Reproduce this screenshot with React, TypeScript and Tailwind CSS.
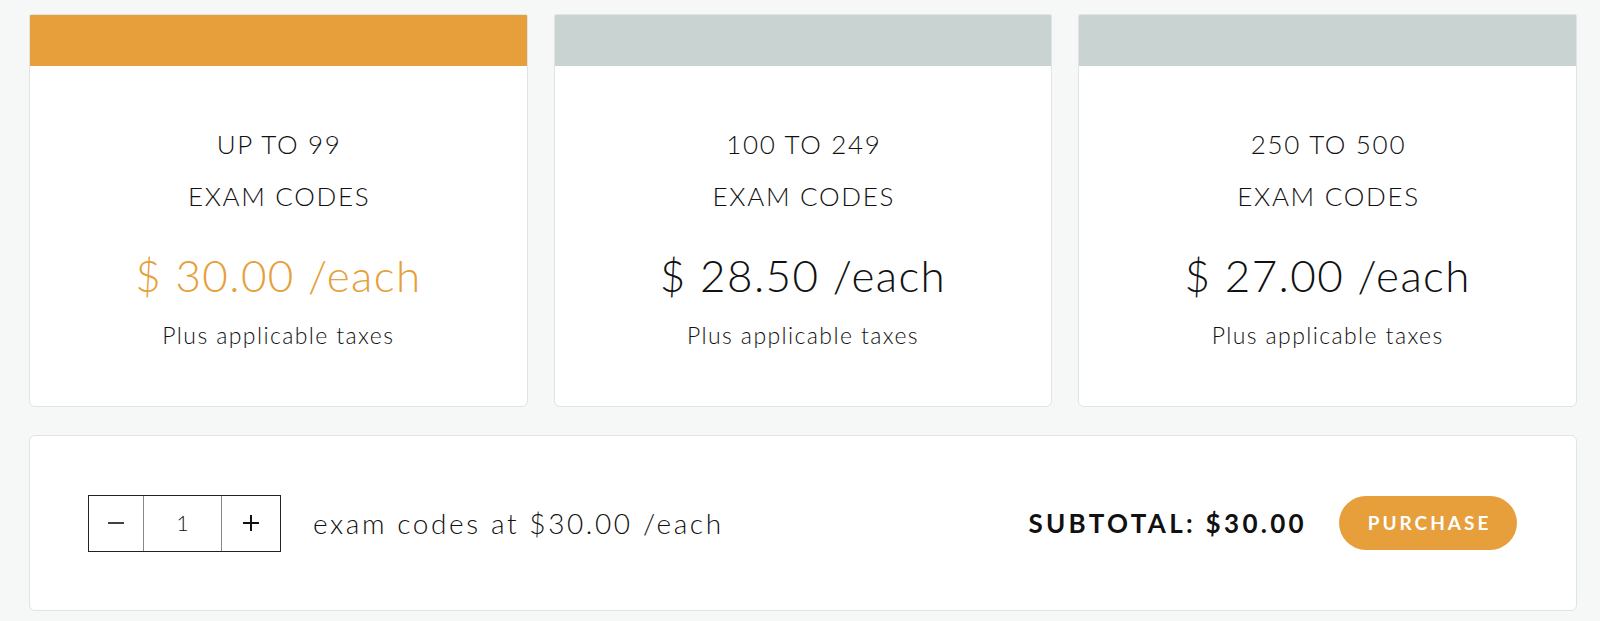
import React from "react";

const tiers = [
  { range: "UP TO 99", price: "$ 30.00 /each", active: true },
  { range: "100 TO 249", price: "$ 28.50 /each", active: false },
  { range: "250 TO 500", price: "$ 27.00 /each", active: false },
];

export default function App() {
  return (
    <div
      className="min-h-[621px] w-full bg-[#f6f8f7] pl-[29px] pr-[23px] pt-[14px] text-[#111]"
      style={{ fontFamily: "Lato, 'Open Sans', sans-serif" }}
    >
      <div className="grid grid-cols-3 gap-[26px]">
        {tiers.map((t) => (
          <div
            key={t.range}
            className="flex h-[393px] flex-col overflow-hidden rounded-b-[6px] rounded-t-[2px] border border-[#dfe5e4] bg-white"
          >
            <div
              className={
                t.active
                  ? "h-[51px] shrink-0 bg-[#e69f3b]"
                  : "h-[51px] shrink-0 bg-[#c9d3d2]"
              }
            />
            <div className="flex flex-col items-center pt-[52px] text-center">
              <div className="h-[52px] pl-[1.7px] text-[26px] font-light leading-[52px] tracking-[1.7px]">
                {t.range}
              </div>
              <div className="h-[52px] pl-[1.7px] text-[26px] font-light leading-[52px] tracking-[1.7px]">
                EXAM CODES
              </div>
              <div
                className={
                  t.active
                    ? "mt-[24px] h-[58px] text-[44px] font-light leading-[58px] tracking-[1.4px] text-[#e69f3b]"
                    : "mt-[24px] h-[58px] text-[44px] font-light leading-[58px] tracking-[1.4px] text-[#111]"
                }
              >
                {t.price}
              </div>
              <div className="mt-[16px] h-[30px] text-[23px] font-light leading-[30px] tracking-[1.4px] text-[#111]">
                Plus applicable taxes
              </div>
            </div>
          </div>
        ))}
      </div>

      <div className="mt-[28px] flex h-[176px] items-center justify-between rounded-[6px] border border-[#dfe5e4] bg-white pl-[58px] pr-[59px]">
        <div className="flex items-center">
          <div className="flex h-[57px] items-stretch border border-[#222]">
            <button className="flex w-[55px] items-center justify-center border-r border-[#888] text-[#333]">
              <svg width="20" height="20" viewBox="0 0 20 20">
                <line x1="2" y1="10" x2="18" y2="10" stroke="#3a4448" strokeWidth="2" />
              </svg>
            </button>
            <div className="flex w-[78px] items-center justify-center border-r border-[#888] text-[21px] font-light">
              1
            </div>
            <button className="flex w-[58px] items-center justify-center">
              <svg width="20" height="20" viewBox="0 0 20 20">
                <line x1="2" y1="10" x2="18" y2="10" stroke="#111" strokeWidth="2" />
                <line x1="10" y1="2" x2="10" y2="18" stroke="#111" strokeWidth="2" />
              </svg>
            </button>
          </div>
          <div className="ml-[32px] text-[28px] font-light tracking-[2.6px]">
            exam codes at $30.00 /each
          </div>
        </div>
        <div className="flex items-center">
          <div className="text-[26px] font-bold tracking-[3.3px]">SUBTOTAL: $30.00</div>
          <button className="ml-[32px] flex h-[54px] w-[178px] items-center justify-center rounded-full bg-[#e69f3b] pl-[3px] text-[19px] font-bold tracking-[3px] text-white">
            PURCHASE
          </button>
        </div>
      </div>
    </div>
  );
}
